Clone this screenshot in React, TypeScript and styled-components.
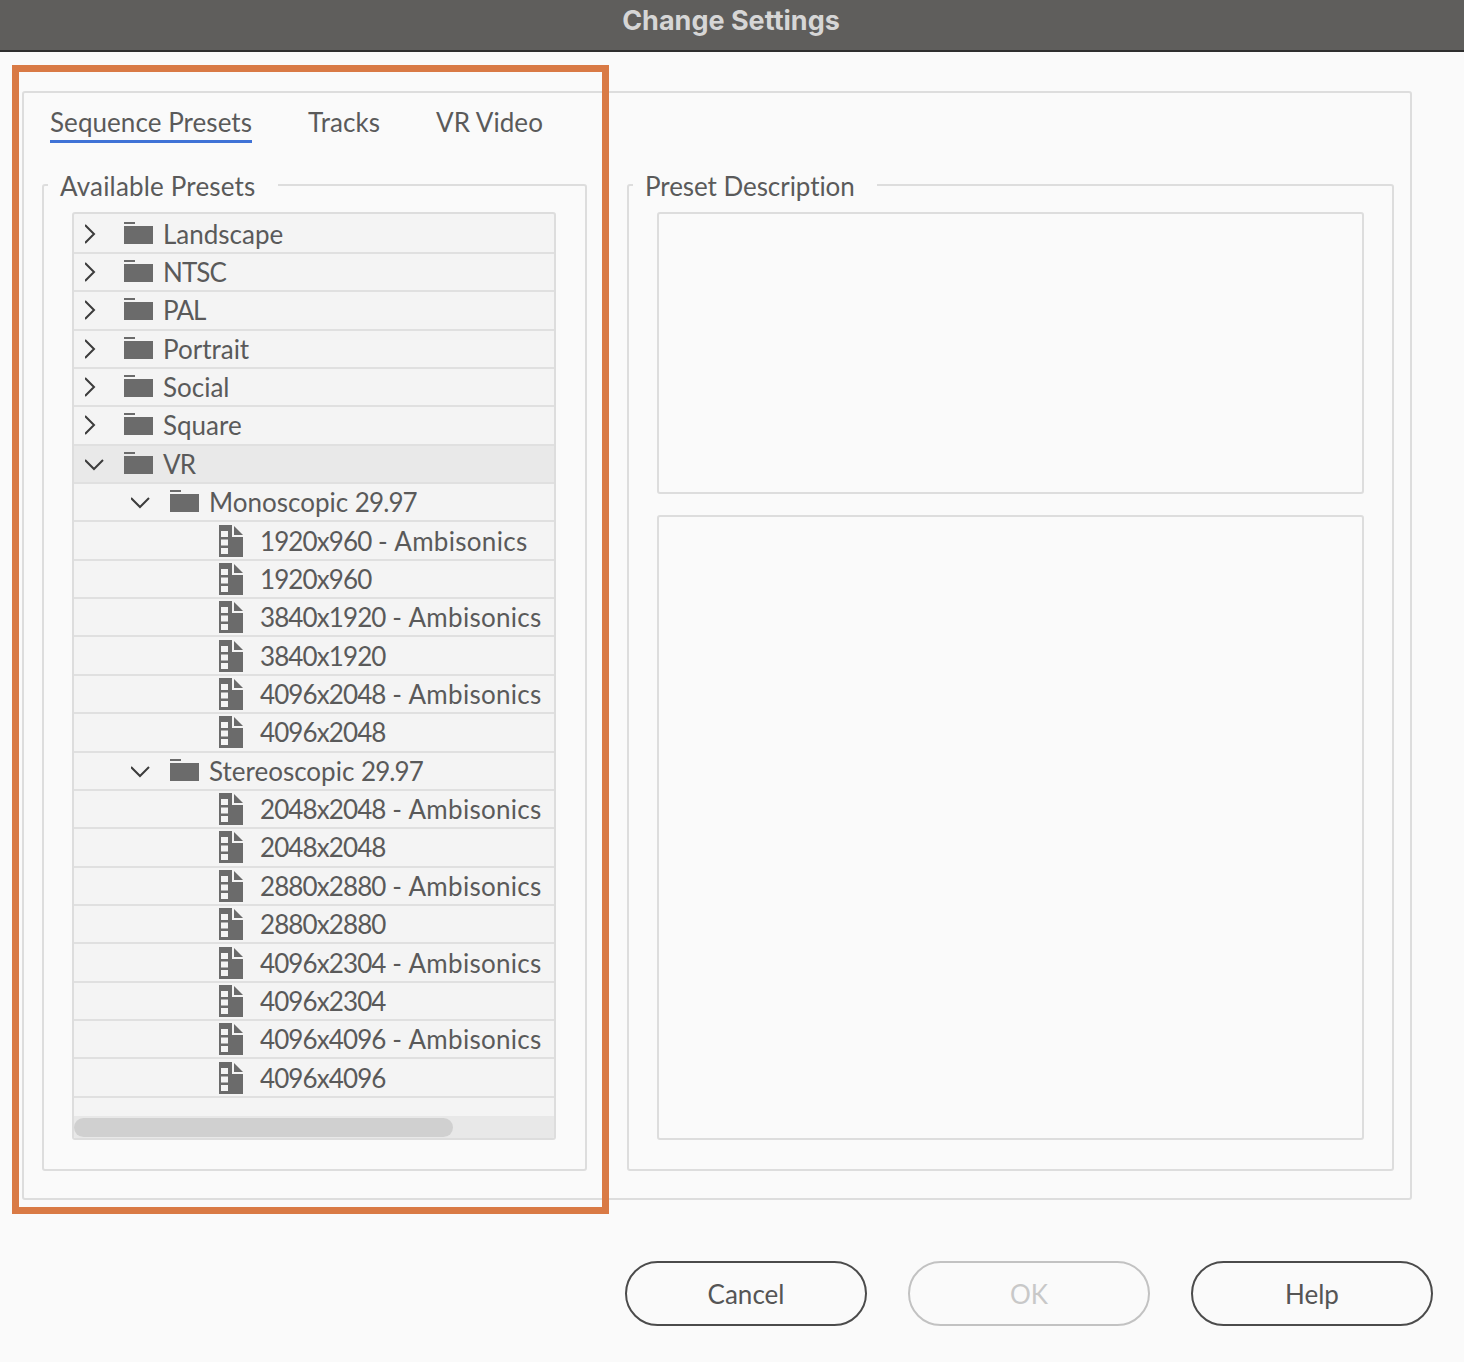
import React from "react";
import styled, { createGlobalStyle } from "styled-components";

const Global = createGlobalStyle`
  html, body { margin: 0; padding: 0; background: #ffffff; }
  * { box-sizing: border-box; }
  body { font-family: "Lato", "Liberation Sans", sans-serif; color: #5a5a5a; }
`;

const Dialog = styled.div`
  position: relative;
  width: 1464px;
  height: 1362px;
  background: #fafafa;
  display: flex;
  flex-direction: column;
  overflow: hidden;
`;

const TitleBar = styled.header`
  height: 52px;
  flex: none;
  background: #5f5e5c;
  border-bottom: 2px solid #2e2e2e;
  display: flex;
  align-items: center;
  justify-content: center;
  padding-bottom: 9px;
  padding-right: 2px;
  color: #d6d6d6;
  font-family: "Inter", "Liberation Sans", sans-serif;
  font-weight: 700;
  font-size: 27px;
`;

const Outer = styled.section`
  width: 1390px;
  height: 1109px;
  margin: 39px 0 0 22px;
  border: 2px solid #dddddd;
  border-radius: 3px;
  flex: none;
  padding: 0 16px 0 18px;
`;

const Tabs = styled.nav`
  display: flex;
  gap: 56px;
  padding-left: 8px;
  height: 50px;
  margin-bottom: 24px;
`;

const Tab = styled.div<{ $active?: boolean }>`
  font-size: 26px;
  letter-spacing: 0.06px;
  height: 50px;
  line-height: 58px;
  color: #5a5a5a;
  border-bottom: 3px solid ${(p) => (p.$active ? "#3f72d6" : "transparent")};
`;

const Columns = styled.div`
  display: flex;
  gap: 40px;
`;

const Group = styled.fieldset<{ $w: number }>`
  flex: none;
  width: ${(p) => p.$w}px;
  height: 1004px;
  margin: 0;
  padding: 9px 28px 0 28px;
  border: 2px solid #dddddd;
  border-radius: 3px;
  min-inline-size: 0;
  display: flex;
  flex-direction: column;
`;

const Legend = styled.legend<{ $track: number }>`
  margin-left: -24px;
  padding: 0 22px 0 12px;
  font-size: 26px;
  letter-spacing: ${(p) => p.$track}px;
  height: 36px;
  line-height: 39px;
  color: #5a5a5a;
`;

const Tree = styled.div`
  width: 484px;
  height: 928px;
  border: 2px solid #dddddd;
  border-radius: 3px;
  background: #f4f4f4;
  display: flex;
  flex-direction: column;
  overflow: hidden;
`;

const Rows = styled.div`
  flex: 1;
  padding-top: 1.5px;
`;

const Row = styled.div<{ $indent: number; $selected?: boolean }>`
  height: 38.37px;
  padding-left: ${(p) => p.$indent}px;
  display: flex;
  align-items: center;
  border-bottom: 2px solid #e0e0e0;
  background: ${(p) => (p.$selected ? "#e9e9e9" : "#f4f4f4")};
  white-space: nowrap;
`;

const Toggle = styled.svg`
  width: 20px;
  height: 20px;
  margin-right: 19px;
  flex: none;
  fill: none;
  stroke: #3c3c3c;
  stroke-width: 2;
`;

const FolderIcon = styled.svg`
  width: 30px;
  height: 24px;
  flex: none;
  margin-right: 9px;
  fill: #6b6b6b;
`;

const FileIcon = styled.svg`
  width: 26px;
  height: 32px;
  flex: none;
  margin-right: 15px;
  fill: #6b6b6b;
`;

const Label = styled.span`
  font-size: 26px;
  line-height: 36px;
  color: #5a5a5a;
`;

const Tight = styled.span`
  letter-spacing: -0.9px;
`;

const Wide = styled.span`
  letter-spacing: 0.3px;
`;

const ScrollTrack = styled.div`
  height: 22px;
  flex: none;
  background: #e8e8e8;
  padding: 2px 0 0 0;
`;

const ScrollThumb = styled.div`
  width: 379px;
  height: 19px;
  border-radius: 10px;
  background: #d0d0d0;
`;

const Stack = styled.div`
  display: flex;
  flex-direction: column;
  gap: 21px;
`;

const DescBox = styled.div<{ $h: number }>`
  width: 707px;
  height: ${(p) => p.$h}px;
  border: 2px solid #dddddd;
  border-radius: 3px;
`;

const Footer = styled.footer`
  display: flex;
  justify-content: flex-end;
  gap: 41px;
  padding-right: 31px;
  margin-top: 61px;
`;

const Button = styled.button<{ $disabled?: boolean }>`
  width: 242px;
  height: 65px;
  border-radius: 33px;
  background: transparent;
  border: 2px solid ${(p) => (p.$disabled ? "#c2c2c2" : "#4b4b4b")};
  color: ${(p) => (p.$disabled ? "#c8c8c8" : "#555555")};
  font-family: inherit;
  font-size: 26px;
  padding: 0;
`;

const Highlight = styled.div`
  position: absolute;
  left: 12px;
  top: 65px;
  width: 597px;
  height: 1149px;
  border: 7px solid #d97a45;
  pointer-events: none;
`;

const Right = () => (
  <Toggle viewBox="0 0 20 20">
    <path d="M0 1 L9 10 L0 19" />
  </Toggle>
);

const Down = () => (
  <Toggle viewBox="0 0 20 20">
    <path d="M0 6 L9 15 L18 6" />
  </Toggle>
);

const Folder = () => (
  <FolderIcon viewBox="0 0 30 24">
    <rect x="0" y="0" width="11" height="2" />
    <rect x="0" y="4" width="29" height="18" />
  </FolderIcon>
);

const File = () => (
  <FileIcon viewBox="0 0 26 32">
    <path
      fillRule="evenodd"
      d="M0 0 H13 V12 H24 V32 H0 Z M2 6 V12 H9 V6 Z M2 14.5 V20.5 H9 V14.5 Z M2 23 V29 H9 V23 Z"
    />
    <path d="M15 1 L24 10 H15 Z" />
  </FileIcon>
);

type Item = { t: string; k: "closed" | "open" | "sub" | "file"; sel?: boolean };

const files = (names: string[]): Item[] => names.map((t) => ({ t, k: "file" as const }));

const items: Item[] = [
  { t: "Landscape", k: "closed" },
  { t: "NTSC", k: "closed" },
  { t: "PAL", k: "closed" },
  { t: "Portrait", k: "closed" },
  { t: "Social", k: "closed" },
  { t: "Square", k: "closed" },
  { t: "VR", k: "open", sel: true },
  { t: "Monoscopic 29.97", k: "sub" },
  ...files([
    "1920x960 - Ambisonics",
    "1920x960",
    "3840x1920 - Ambisonics",
    "3840x1920",
    "4096x2048 - Ambisonics",
    "4096x2048",
  ]),
  { t: "Stereoscopic 29.97", k: "sub" },
  ...files([
    "2048x2048 - Ambisonics",
    "2048x2048",
    "2880x2880 - Ambisonics",
    "2880x2880",
    "4096x2304 - Ambisonics",
    "4096x2304",
    "4096x4096 - Ambisonics",
    "4096x4096",
  ]),
];

const indent = { closed: 11, open: 11, sub: 57, file: 145 };

const renderLabel = (t: string) =>
  t.split(/(\d[\dx.]*|\b[A-Z]{2,}\b|Ambisonics)/).map((part, i) => {
    if (i % 2 === 0) return part;
    return part === "Ambisonics" ? <Wide key={i}>{part}</Wide> : <Tight key={i}>{part}</Tight>;
  });

export default function App() {
  return (
    <>
      <Global />
      <Dialog>
        <TitleBar>Change Settings</TitleBar>
        <Outer>
          <Tabs>
            <Tab $active>Sequence Presets</Tab>
            <Tab>Tracks</Tab>
            <Tab>VR Video</Tab>
          </Tabs>
          <Columns>
            <Group $w={545}>
              <Legend $track={0.18}>Available Presets</Legend>
              <Tree>
                <Rows>
                  {items.map((it) => (
                    <Row key={it.t} $indent={indent[it.k]} $selected={it.sel}>
                      {it.k === "closed" && <Right />}
                      {(it.k === "open" || it.k === "sub") && <Down />}
                      {it.k === "file" ? <File /> : <Folder />}
                      <Label>{renderLabel(it.t)}</Label>
                    </Row>
                  ))}
                </Rows>
                <ScrollTrack>
                  <ScrollThumb />
                </ScrollTrack>
              </Tree>
            </Group>
            <Group $w={767}>
              <Legend $track={-0.06}>Preset Description</Legend>
              <Stack>
                <DescBox $h={282} />
                <DescBox $h={625} />
              </Stack>
            </Group>
          </Columns>
        </Outer>
        <Footer>
          <Button>Cancel</Button>
          <Button $disabled>OK</Button>
          <Button>Help</Button>
        </Footer>
        <Highlight />
      </Dialog>
    </>
  );
}
